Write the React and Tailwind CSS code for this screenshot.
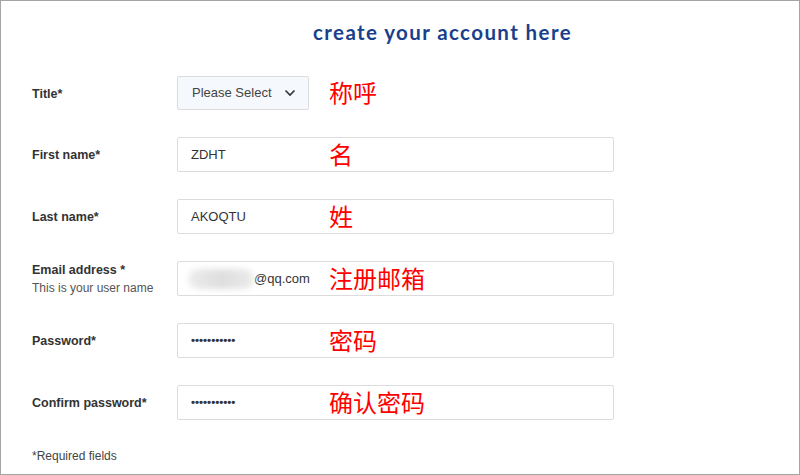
import React from 'react';

const fields = [
  { label: 'First name*', value: 'ZDHT', note: '名' },
  { label: 'Last name*', value: 'AKOQTU', note: '姓' },
  { label: 'Email address *', sub: 'This is your user name', email: true, note: '注册邮箱' },
  { label: 'Password*', dots: true, note: '密码' },
  { label: 'Confirm password*', dots: true, note: '确认密码' },
];

const Note = ({ children }) => (
  <span className="absolute left-[297px] top-[calc(50%-14px)] text-[24px] leading-[26px] text-[#ff0000] font-['Noto_Sans_CJK_SC',sans-serif]">
    {children}
  </span>
);

const App = () => {
  return (
    <div className="w-[800px] h-[475px] border border-[#a4a4a4] bg-white relative font-['Liberation_Sans',Arial,sans-serif] text-[#333]">
      <h1 className="pl-[312px] pt-[17px] text-[20.5px] leading-[28px] font-bold text-[#1a3f8c] font-['Lato',sans-serif] tracking-[1.4px]">
        create your account here
      </h1>

      <div className="mt-[30px] pl-[31px] flex flex-col gap-[27px]">
        <div className="relative flex items-center h-[34px]">
          <div className="w-[145px] pt-[2px] text-[12.5px] font-bold">Title*</div>
          <div className="w-[132px] h-[34px] flex items-center justify-between pl-[14px] pr-[12px] bg-[#f5f8fc] border border-[#dcdcdc] rounded-[2px] text-[13px] text-[#444]">
            <span>Please Select</span>
            <svg width="12" height="8" viewBox="0 0 12 8" fill="none" stroke="#333" strokeWidth="1.6">
              <path d="M1.5 1.5 L6 6 L10.5 1.5" />
            </svg>
          </div>
          <Note>称呼</Note>
        </div>

        {fields.map((f) => (
          <div key={f.label} className="relative flex items-center h-[35px]">
            <div className="w-[145px] pt-[2px]">
              <div className="text-[12.5px] font-bold leading-[17px]">{f.label}</div>
              {f.sub && <div className="text-[12px] leading-[18px] text-[#555]">{f.sub}</div>}
            </div>
            <div className="w-[437px] h-[35px] flex items-center pl-[13px] border border-[#dcdcdc] rounded-[2px] text-[13px] text-[#333]">
              {f.value && <span>{f.value}</span>}
              {f.email && (
                <span className="flex items-center">
                  <span className="-ml-[3px] w-[66px] h-[20px] bg-gradient-to-r from-[#ececec] via-[#dedede] to-[#ebebeb] rounded-full blur-[3px]" />
                  <span>@qq.com</span>
                </span>
              )}
              {f.dots && <span className="text-[11.5px] font-bold">•••••••••••</span>}
            </div>
            <Note>{f.note}</Note>
          </div>
        ))}
      </div>

      <p className="pl-[31px] mt-[27px] text-[12px] text-[#444]">*Required fields</p>
    </div>
  );
};

export default App;
